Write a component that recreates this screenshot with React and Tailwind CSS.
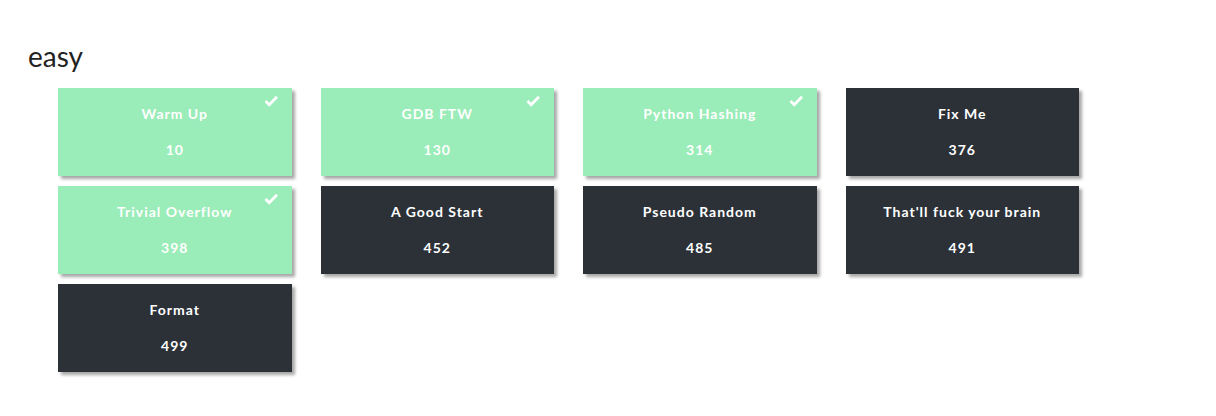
const challenges = [
  { name: 'Warm Up', value: 10, solved: true },
  { name: 'GDB FTW', value: 130, solved: true },
  { name: 'Python Hashing', value: 314, solved: true },
  { name: 'Fix Me', value: 376 },
  { name: 'Trivial Overflow', value: 398, solved: true },
  { name: 'A Good Start', value: 452 },
  { name: 'Pseudo Random', value: 485 },
  { name: "That'll fuck your brain", value: 491 },
  { name: 'Format', value: 499 },
];

function Check() {
  return (
    <svg width="15" height="12" viewBox="0 0 15 12" className="absolute right-[13px] top-[7px]">
      <path d="M1.5 6 L5.2 9.7 L13 1.8" fill="none" stroke="white" strokeWidth="2.8" />
    </svg>
  );
}

function Card({ name, value, solved }) {
  return (
    <div
      className={`relative flex h-[88px] flex-col items-center justify-center gap-[18px] shadow-[3px_3px_3px_rgba(0,0,0,0.35)] ${
        solved ? 'bg-[#9aecb8]' : 'bg-[#2c3138]'
      }`}
    >
      {solved && <Check />}
      <div className="text-[14px] font-bold leading-[18px] tracking-[1px] text-white">{name}</div>
      <div className="text-[14px] font-bold leading-[18px] tracking-[1px] text-white">{value}</div>
    </div>
  );
}

export default function App() {
  return (
    <div className="min-h-[416px] bg-white pt-[38px] font-['Lato',sans-serif]">
      <h2 className="pl-[28px] text-[28px] font-normal leading-[36px] text-[#222]">easy</h2>
      <div className="ml-[58px] mt-[14px] grid w-[1021px] grid-cols-4 gap-x-[29px] gap-y-[10px]">
        {challenges.map((c) => (
          <Card key={c.name} {...c} />
        ))}
      </div>
    </div>
  );
}
